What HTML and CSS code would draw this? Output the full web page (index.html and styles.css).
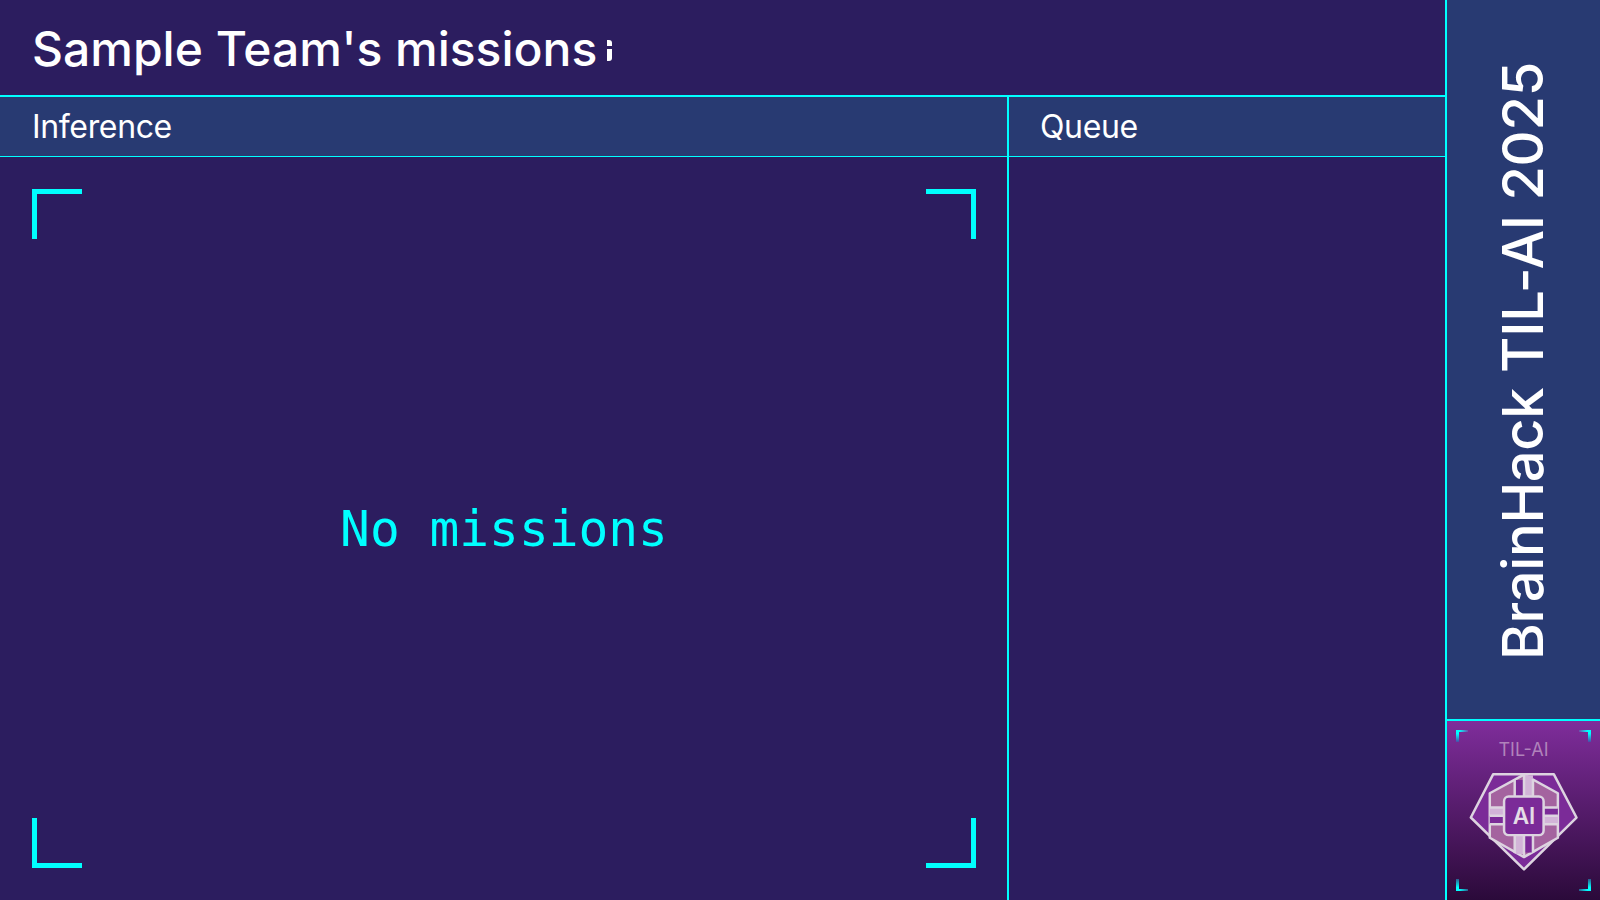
FILE: index.html
```html
<!DOCTYPE html>
<html lang="en">
<head>
    <meta charset="UTF-8">
    <meta name="viewport" content="width=device-width, initial-scale=1.0">
    <title>Missions</title>
    <link rel="stylesheet" href="styles.css">
</head>

<body>
    <div class="app">
        <div class="main">
            <div class="page-title">Sample Team's missions<span class="title-glitch"></span></div>
            <div class="columns">
                <div class="column column-inference">
                    <div class="column-head">Inference</div>
                    <div class="column-body">
                        <div class="frame">
                            <span class="corner top-left"></span>
                            <span class="corner top-right"></span>
                            <span class="corner bottom-left"></span>
                            <span class="corner bottom-right"></span>
                            <div class="empty">No missions</div>
                        </div>
                    </div>
                </div>
                <div class="column column-queue">
                    <div class="column-head">Queue</div>
                    <div class="column-body"></div>
                </div>
            </div>
        </div>
        <div class="sidebar">
            <div class="event-name-wrapper">
                <div class="event-name">BrainHack TIL-AI 2025</div>
            </div>
            <div class="logo-panel">
                <span class="mark top-left"></span>
                <span class="mark top-right"></span>
                <span class="mark bottom-left"></span>
                <span class="mark bottom-right"></span>
                <div class="logo-label">TIL-AI</div>
                <svg class="logo" viewBox="0 0 336 310" width="112" height="103">
                    <path class="logo-pentagon" d="M75 13H258L326 143 168 299 8 143Z"/>
                    <path class="logo-hex" d="M168 14L270 70V204L168 262 65 204V70Z"/>
                    <path class="logo-dark" d="M140 30H168V80H140ZM168 196H195V248H168ZM65 138H108V163H65ZM227 113H270V138H227Z"/>
                    <path class="logo-light" d="M168 16H195V80H168ZM140 196H168V253H140ZM65 113H108V138H65ZM227 138H270V163H227Z"/>
                    <path class="logo-line" d="M140 27V80M168 15V80M195 27V80M140 196V250M168 196V262M195 196V250M65 113H108M65 138H108M65 163H108M227 113H270M227 138H270M227 163H270"/>
                    <rect class="logo-chip" x="108" y="80" width="119" height="116" rx="14"/>
                    <text class="logo-ai" x="168" y="163">AI</text>
                </svg>
            </div>
        </div>
    </div>
</body>
</html>
```

FILE: styles.css
```css
*, *:before, *:after {
    box-sizing: border-box;
}

body {
    margin: 0;
    background-color: #2c1d5f;
    color: white;
    font-family: "Inter", "Liberation Sans", sans-serif;
}

.app {
    display: flex;
    height: 100vh;
    overflow: hidden;
}

.main {
    flex: 1;
    display: flex;
    flex-direction: column;
    min-width: 0;
}

.page-title {
    height: 97px;
    flex-shrink: 0;
    display: flex;
    align-items: center;
    padding: 2px 0 0 32px;
    border-bottom: 2px solid #00ffff;
    font-size: 48px;
    font-weight: 500;
}

/* little leftover sliver right after the title */
.title-glitch {
    width: 5px;
    height: 21px;
    margin: 4px 0 0 10px;
    border-radius: 0 3px 3px 0;
    background: linear-gradient(#fff 0, #fff 30%, #2c1d5f 30%, #2c1d5f 42%, #fff 42%, #fff 100%);
}

.columns {
    flex: 1;
    display: flex;
    min-height: 0;
}

.column {
    display: flex;
    flex-direction: column;
}

.column-inference {
    width: 1009px;
    border-right: 2px solid #00ffff;
}

.column-queue {
    flex: 1;
}

.column-head {
    height: 60px;
    flex-shrink: 0;
    display: flex;
    align-items: center;
    padding-left: 32px;
    background-color: #283a72;
    border-bottom: 1px solid #00ffff;
    font-size: 32px;
    letter-spacing: -0.35px;
}

.column-queue .column-head {
    padding-left: 31px;
}

.column-body {
    flex: 1;
    display: flex;
    padding: 32px 31px 32px 32px;
}

.frame {
    position: relative;
    flex: 1;
    display: flex;
    align-items: center;
    justify-content: center;
}

.corner {
    position: absolute;
    width: 50px;
    height: 50px;
    border: 0 solid #00ffff;
}

.corner.top-left {
    top: 0;
    left: 0;
    border-width: 5px 0 0 5px;
}

.corner.top-right {
    top: 0;
    right: 0;
    border-width: 5px 5px 0 0;
}

.corner.bottom-left {
    bottom: 0;
    left: 0;
    border-width: 0 0 5px 5px;
}

.corner.bottom-right {
    bottom: 0;
    right: 0;
    border-width: 0 5px 5px 0;
}

.empty {
    font-family: "DejaVu Sans Mono", "Liberation Mono", monospace;
    font-size: 49.5px;
    color: #00ffff;
}

.sidebar {
    width: 155px;
    flex-shrink: 0;
    display: flex;
    flex-direction: column;
    background-color: #283a72;
    border-left: 2px solid #00ffff;
}

.event-name-wrapper {
    flex: 1;
    display: flex;
    justify-content: center;
    align-items: flex-start;
    padding: 62px 2px 0 0;
}

.event-name {
    writing-mode: vertical-rl;
    transform: rotate(180deg);
    font-size: 56px;
    font-weight: 500;
    letter-spacing: -0.3px;
    line-height: 1;
    white-space: nowrap;
}

.logo-panel {
    position: relative;
    height: 181px;
    flex-shrink: 0;
    display: flex;
    flex-direction: column;
    align-items: center;
    padding-top: 19px;
    border-top: 2px solid #00ffff;
    background: linear-gradient(#7f2d9b, #2b0a3a);
}

.logo-label {
    font-size: 18px;
    line-height: 20px;
    color: #b083bb;
}

.logo {
    margin-top: 10px;
}

.logo-pentagon {
    fill: #7b2b98;
    stroke: #ddd4e0;
    stroke-width: 7.5;
    stroke-linejoin: round;
}

.logo-hex {
    fill: #a4639f;
    stroke: #ddd4e0;
    stroke-width: 7.5;
    stroke-linejoin: round;
}

.logo-dark {
    fill: #7b2b98;
}

.logo-light {
    fill: #d2b4d8;
}

.logo-line {
    fill: none;
    stroke: #ddd4e0;
    stroke-width: 7.5;
}

.logo-chip {
    fill: #7b2b98;
    stroke: #ddd4e0;
    stroke-width: 7.5;
}

.logo-ai {
    font-size: 68px;
    font-weight: 600;
    fill: #e4dce6;
    text-anchor: middle;
}

.mark {
    position: absolute;
    width: 12px;
    height: 12px;
    background-repeat: no-repeat;
}

.mark.top-left {
    top: 9px;
    left: 9px;
    background-image: linear-gradient(to right, #00ffff 30%, #6f4aa8), linear-gradient(to bottom, #00ffff 30%, #4a4aa8);
    background-size: 100% 2px, 3px 100%;
    background-position: top left, top left;
}

.mark.top-right {
    top: 9px;
    right: 9px;
    background-image: linear-gradient(to left, #00ffff 30%, #6f4aa8), linear-gradient(to bottom, #00ffff 30%, #4a4aa8);
    background-size: 100% 2px, 3px 100%;
    background-position: top right, top right;
}

.mark.bottom-left {
    bottom: 9px;
    left: 9px;
    background-image: linear-gradient(to right, #00ffff 30%, #2b5a8a), linear-gradient(to top, #00ffff 30%, #2b5a8a);
    background-size: 100% 2px, 3px 100%;
    background-position: bottom left, bottom left;
}

.mark.bottom-right {
    bottom: 9px;
    right: 9px;
    background-image: linear-gradient(to left, #00ffff 30%, #2b5a8a), linear-gradient(to top, #00ffff 30%, #2b5a8a);
    background-size: 100% 2px, 3px 100%;
    background-position: bottom right, bottom right;
}
```
